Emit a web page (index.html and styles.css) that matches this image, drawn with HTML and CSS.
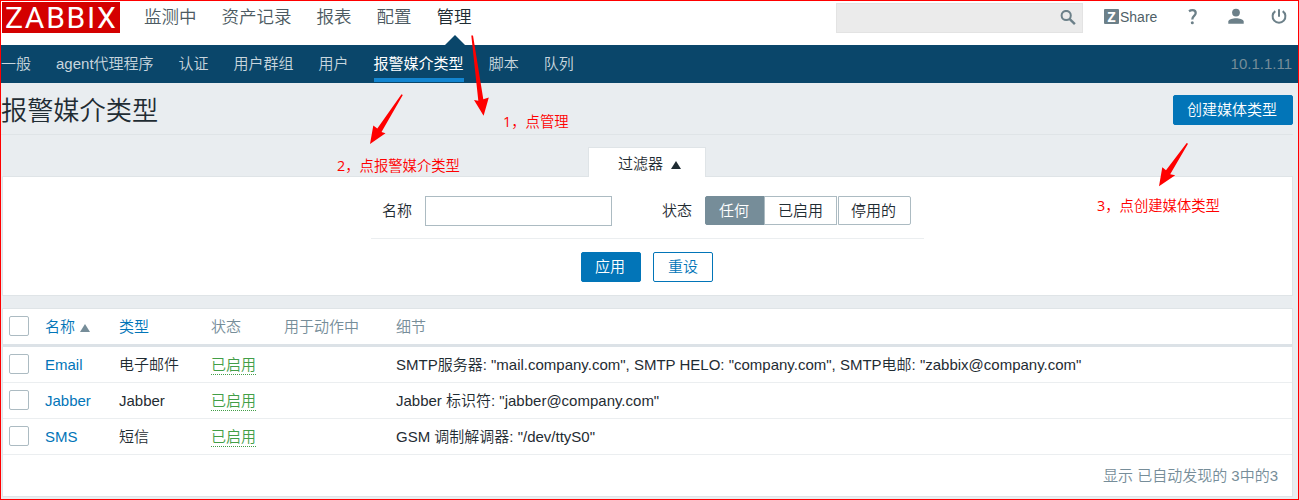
FILE: index.html
```html
<!DOCTYPE html>
<html lang="zh-CN">
<head>
<meta charset="utf-8">
<title>报警媒介类型</title>
<link rel="stylesheet" href="styles.css">
</head>
<body>
<div class="page">
  <header class="top">
    <div class="logo">ZABBIX</div>
    <nav class="menu">
      <a>监测中</a><a>资产记录</a><a>报表</a><a>配置</a><a class="on">管理</a>
    </nav>
    <div class="search">
      <svg width="16" height="16" viewBox="0 0 16 16"><circle cx="6.200" cy="5.500" r="4.600" fill="none" stroke="#6c8089" stroke-width="2"/><path d="M9.500 8.800l5.400 5.400" stroke="#6c8089" stroke-width="2.400"/></svg>
    </div>
    <a class="share"><b>Z</b><span>Share</span></a>
    <svg class="help" width="10" height="16" viewBox="0 0 10 16"><path d="M1 2.300Q2.700 1.200 4.500 1.200C6.800 1.200 7.700 2.400 7.700 4C7.700 6.900 4.300 6.900 4.300 10.400" fill="none" stroke="#6c8089" stroke-width="2.300"/><circle cx="4.300" cy="13.800" r="1.500" fill="#6c8089"/></svg>
    <svg class="user" width="16" height="16" viewBox="0 0 16 16"><circle cx="8" cy="4.600" r="3.900" fill="#6c8089"/><path d="M.3 15.700V13.500C.5 11 5 10.200 8 10.200s7.500.8 7.700 3.300v2.200z" fill="#6c8089"/></svg>
    <svg class="power" width="16" height="16" viewBox="0 0 16 16"><path d="M8 .3v7.500M4.300 2.100A6.400 6.400 0 1 0 11.700 2.100" fill="none" stroke="#6c8089" stroke-width="2"/></svg>
  </header>
  <nav class="sub">
    <a>一般</a><a>agent代理程序</a><a>认证</a><a>用户群组</a><a>用户</a><a class="on">报警媒介类型</a><a>脚本</a><a>队列</a>
    <span class="server">10.1.1.11</span>
  </nav>
  <main>
    <div class="title">
      <h1>报警媒介类型</h1>
      <button class="btn create">创建媒体类型</button>
    </div>
    <div class="tab">过滤器<i class="up"></i></div>
    <section class="filter">
      <div class="fields">
        <label class="name">名称</label><input type="text" class="input">
        <label class="state">状态</label>
        <div class="radio"><span class="sel">任何</span><span>已启用</span><span class="last">停用的</span></div>
      </div>
      <div class="actions"><button class="btn">应用</button><button class="btn alt">重设</button></div>
    </section>
    <section class="list">
      <div class="row head"><i class="check"></i><a>名称<i class="up"></i></a><a>类型</a><span>状态</span><span>用于动作中</span><span>细节</span></div>
      <div class="row"><i class="check"></i><a>Email</a><span>电子邮件</span><span><em>已启用</em></span><span></span><span>SMTP服务器: "mail.company.com", SMTP HELO: "company.com", SMTP电邮: "zabbix@company.com"</span></div>
      <div class="row"><i class="check"></i><a>Jabber</a><span>Jabber</span><span><em>已启用</em></span><span></span><span>Jabber 标识符: "jabber@company.com"</span></div>
      <div class="row"><i class="check"></i><a>SMS</a><span>短信</span><span><em>已启用</em></span><span></span><span>GSM 调制解调器: "/dev/ttyS0"</span></div>
      <div class="foot">显示 已自动发现的 3中的3</div>
    </section>
  </main>
  <svg class="arrows" width="1299" height="500" viewBox="0 0 1299 500" fill="#f00">
    <path d="M471.300 35.500H473L483.300 99.300L488.800 97.500L483.600 115.700L474 100L478.300 100.800Z"/>
    <path d="M401.500 94.300L402.800 95L381.500 132L385.500 133.300L370 144L373.300 125.500L377.300 128.500Z"/>
    <path d="M1186.700 143L1188 143.800L1170.200 174.200L1175.200 175.300L1159 186.300L1162.300 167.300L1166 170.300Z"/>
  </svg>
  <div class="note one"><b>1</b>，点管理</div>
  <div class="note two"><b>2</b>，点报警媒介类型</div>
  <div class="note three"><b>3</b>，点创建媒体类型</div>
</div>
</body>
</html>
```
FILE: styles.css
```css
* { box-sizing: border-box; }
body { margin: 0; font: 350 15px/18px "Liberation Sans", "Noto Sans CJK SC", sans-serif; color: #1f2c33; }
.page { position: relative; width: 1299px; height: 500px; overflow: hidden; background: #e9edf0; }
.page::after { content: ""; position: absolute; inset: 0; border: 1px solid #f00; pointer-events: none; }

.top { display: flex; height: 45px; padding: 2px 12px 0 2px; background: #fff; align-items: flex-start; }
.logo { width: 118px; height: 31px; padding-left: 3px; background: #d40000; color: #fff; font: 400 30px/31px Roboto, sans-serif; letter-spacing: 1.700px; white-space: nowrap; }
.menu { display: flex; gap: 25px; margin-left: 24px; font-size: 17.500px; line-height: 30px; color: #4c5a62; }
.menu a { height: 43px; white-space: nowrap; }
.menu .on { position: relative; color: #1f2c33; }
.menu .on::after { content: ""; position: absolute; left: 8px; bottom: 0; border: 10px solid transparent; border-top: 0; border-bottom-color: #0a466a; }
.search { display: flex; width: 247px; height: 30px; margin: 1px 0 0 auto; padding: 6px; background: #ebebeb; border: 1px solid #e3e3e3; justify-content: flex-end; }
.share { display: flex; margin: 7px 0 0 21px; width: 54px; font-size: 14px; line-height: 16px; color: #4f5f68; gap: 1px; }
.share b { width: 15px; height: 15px; flex: none; background: #6c8089; color: #fff; border-radius: 1px; font: bold 14px/15px "Noto Sans", sans-serif; text-align: center; }
.help { margin: 7px 0 0 30px; }
.user { margin: 6px 0 0 30px; }
.power { margin: 7px 0 0 27px; }

.sub { display: flex; gap: 25px; height: 38px; padding: 0 7px 0 1px; background: #0a466a; color: #c8d6de; line-height: 37px; }
.sub a { white-space: nowrap; height: 37px; }
.sub .on { color: #fff; font-weight: 400; border-bottom: 4px solid #1385d0; }
.server { margin-left: auto; color: #768d99; }

main { padding: 0 6px 0 2px; }
.title { display: flex; height: 52px; margin-left: -1px; border-bottom: 1px solid #dfe4e7; justify-content: space-between; }
h1 { margin: 0; font-size: 26.200px; line-height: 56px; font-weight: 350; }
.btn { width: 60px; height: 30px; padding: 0 2px 0 0; border: 1px solid #0275b8; border-radius: 2px; background: #0275b8; color: #fff; font: inherit; line-height: 28px; }
.btn.alt { padding: 0; background: #fff; color: #0275b8; }
.create { width: 120px; margin-top: 12px; }
.tab { position: relative; display: flex; width: 118px; height: 30px; margin: 12px 0 -1px 586px; background: #fff; border: 1px solid #dfe4e7; border-bottom: 0; align-items: center; justify-content: center; padding: 3px 0 0 5px; }
.up { display: inline-block; border: 5px solid transparent; border-top: 0; border-bottom: 8px solid #1f2c33; margin: 1px 0 0 8px; }
.filter { height: 120px; background: #fff; border: 1px solid #dfe4e7; padding-left: 368px; }
.fields { display: flex; width: 553px; height: 62px; padding: 19px 0 0 11px; border-bottom: 1px solid #ebeef0; align-items: flex-start; }
.fields label { width: 43px; line-height: 29px; }
.input { width: 187px; height: 30px; border: 1px solid #acbbc2; padding: 0; margin: 0; }
.fields .state { margin-left: 50px; }
.radio { display: flex; }
.radio span { width: 73px; height: 29px; border: 1px solid #acbbc2; line-height: 27px; text-align: center; }
.radio .sel { width: 60px; margin-right: -1px; padding-right: 2px; background: #768d99; border-color: #768d99; color: #fff; border-radius: 2px 0 0 2px; }
.radio .last { padding-right: 2px; margin-left: 1px; border-radius: 0 2px 2px 0; }
.actions { display: flex; gap: 12px; padding: 13px 0 0 210px; }

.list { height: 189px; margin-top: 12px; background: #fff; border: 1px solid #dfe4e7; }
.row { display: grid; grid-template-columns: 36px 74px 92px 73px 112px 1fr; height: 36px; padding-left: 6px; border-bottom: 1px solid #ebeef0; align-items: center; white-space: nowrap; }
.head { height: 38px; border-bottom: 3px solid #dce2e7; color: #768d99; }
.row a { color: #0275b8; }
.row .up { margin: 0 0 0 5px; border-bottom-color: #768d99; }
.check { width: 20px; height: 20px; margin-bottom: 2px; border: 1px solid #acbbc2; border-radius: 2px; }
.row em { display: inline-block; font-style: normal; color: #429e47; border-bottom: 1px dotted #429e47; line-height: 19px; }
.foot { text-align: right; padding: 12px 14px 0 0; color: #768d99; }

.arrows { position: absolute; left: 0; top: 0; }
.note { position: absolute; color: #f00; font: 350 14.350px/18px "Open Sans", "Noto Sans CJK SC", sans-serif; white-space: nowrap; }
.note b { font-weight: 400; }
.one { left: 503px; top: 113px; }
.two { left: 337px; top: 157px; }
.three { left: 1097px; top: 197px; }
```
